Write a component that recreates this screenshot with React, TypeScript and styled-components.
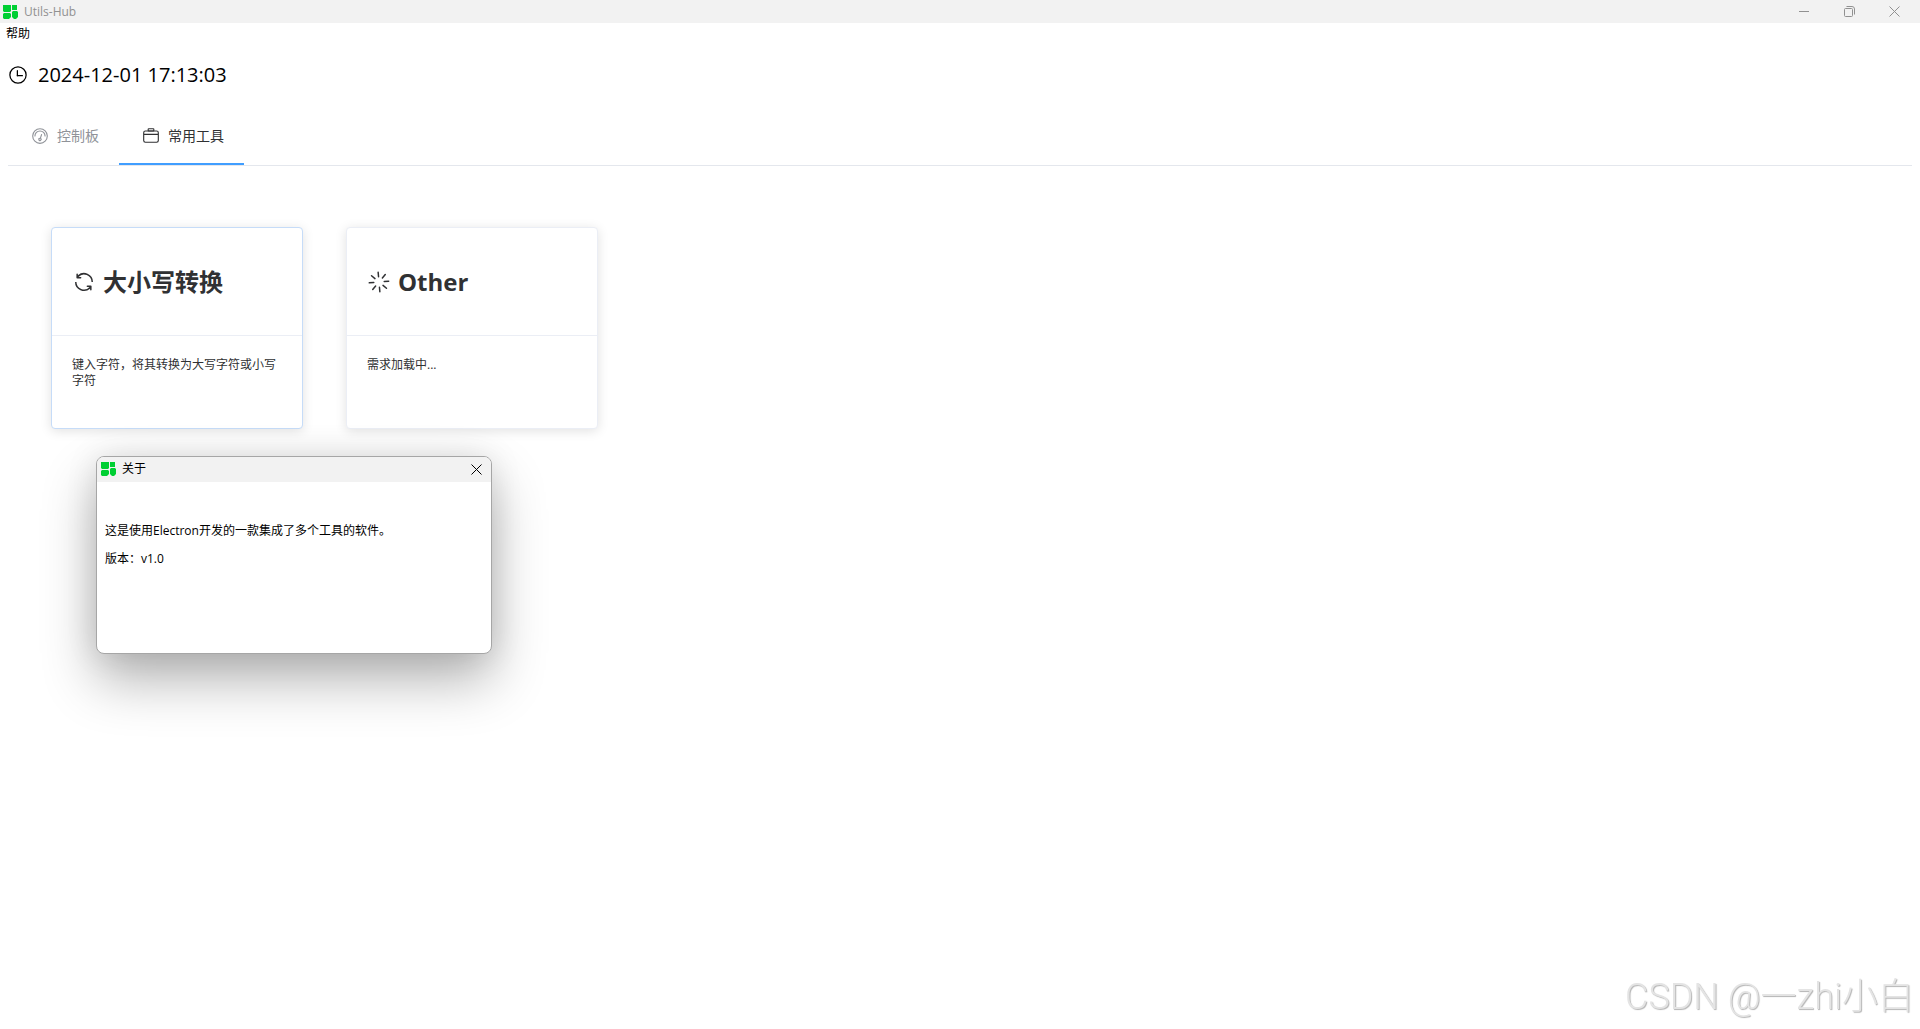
import React from "react";
import styled, { createGlobalStyle } from "styled-components";

const uiFont = `"Open Sans", "Noto Sans CJK SC", sans-serif`;

const GlobalStyle = createGlobalStyle`
  *, *::before, *::after { box-sizing: border-box; }
  body { margin: 0; background: #fff; color: #000; font: 12px/16px ${uiFont}; }
  h1, h2, p { margin: 0; }
  button { margin: 0; padding: 0; border: 0; background: none; color: inherit; font: inherit; }
`;

const Window = styled.div`
  display: flex;
  flex-direction: column;
  min-height: 100vh;
`;

const TitleBar = styled.header<{ $inactive?: boolean }>`
  display: flex;
  align-items: center;
  background: #f2f2f2;
  height: ${(p) => (p.$inactive ? 23 : 25)}px;
  padding: ${(p) => (p.$inactive ? "0 3px" : "0 0 1px 4px")};
  color: ${(p) => (p.$inactive ? "#919191" : "#000")};
`;

const WindowTitle = styled.h2`
  flex: 1;
  margin-left: 6px;
  font-size: 12px;
  line-height: 16px;
  font-weight: 400;
`;

const CaptionButton = styled.button<{ $width: number }>`
  display: flex;
  align-items: center;
  justify-content: center;
  width: ${(p) => p.$width}px;
  height: 20px;
`;

const MenuBar = styled.nav`
  display: flex;
  padding: 3px 6px 1px;
`;

const MenuItem = styled.button`
  font-size: 12px;
  line-height: 16px;
`;

const Main = styled.main`
  display: flex;
  flex-direction: column;
  padding: 16px 8px;
`;

const ClockRow = styled.div`
  display: flex;
  align-items: center;
  gap: 10px;
  height: 32px;
  font-size: 20px;
  line-height: 28px;
`;

const Tabs = styled.div`
  display: flex;
  margin-top: 10px;
  border-bottom: 1px solid #e4e7ed;
`;

const Tab = styled.button<{ $active?: boolean }>`
  display: flex;
  align-items: center;
  gap: 8px;
  height: 64px;
  padding: 8px 20px 0 23px;
  border-bottom: 2px solid ${(p) => (p.$active ? "#409eff" : "transparent")};
  color: ${(p) => (p.$active ? "#303133" : "#909399")};
  font-size: 14px;
  line-height: 20px;
`;

const CardList = styled.section`
  display: flex;
  flex-wrap: wrap;
  gap: 43px;
  padding: 61px 43px;
`;

const Card = styled.article<{ $hovered?: boolean }>`
  width: 252px;
  min-height: 202px;
  border: 1px solid ${(p) => (p.$hovered ? "#c6dcf8" : "#ebeef5")};
  border-radius: 4px;
  background: #fff;
  color: #303133;
  box-shadow: 0 2px 12px rgba(0, 0, 0, 0.12);
`;

const CardHeader = styled.div`
  display: flex;
  align-items: center;
  gap: 7px;
  height: 108px;
  padding: 0 20px;
  border-bottom: 1px solid #ebeef5;
`;

const CardTitle = styled.h1`
  font-size: 24px;
  line-height: 32px;
  font-weight: 700;
`;

const CardText = styled.p`
  padding: 21px 20px;
`;

const Dialog = styled.div`
  position: absolute;
  left: 96px;
  top: 456px;
  width: 396px;
  height: 198px;
  overflow: hidden;
  border: 1px solid #a6a6a6;
  border-radius: 8px;
  background: #fff;
  box-shadow: 0 26px 54px rgba(0, 0, 0, 0.3), 0 0 32px rgba(0, 0, 0, 0.1);
`;

const DialogBody = styled.div`
  display: flex;
  flex-direction: column;
  gap: 12px;
  padding: 41px 8px;
`;

const Watermark = styled.div`
  position: fixed;
  right: 6px;
  bottom: 4px;
  color: #e4e4e4;
  font: 300 36px/56px Roboto, "Noto Sans CJK SC", sans-serif;
  text-shadow: 1px 1px 1px #b4b4b4;
`;

const iconPaths = {
  clock: [
    "M512 896a384 384 0 1 0 0-768 384 384 0 0 0 0 768m0 64a448 448 0 1 1 0-896 448 448 0 0 1 0 896",
    "M480 256a32 32 0 0 1 32 32v256a32 32 0 0 1-64 0V288a32 32 0 0 1 32-32",
    "M480 512h256q32 0 32 32t-32 32H480q-32 0-32-32t32-32",
  ],
  odometer: [
    "M512 896a384 384 0 1 0 0-768 384 384 0 0 0 0 768m0 64a448 448 0 1 1 0-896 448 448 0 0 1 0 896",
    "M192 512a320 320 0 1 1 640 0 32 32 0 1 1-64 0 256 256 0 1 0-512 0 32 32 0 0 1-64 0",
    "M570.432 627.84A96 96 0 1 1 509.568 608l60.992-187.776A32 32 0 1 1 631.424 440l-60.992 187.776zM502.08 734.464a32 32 0 1 0 19.84-60.928 32 32 0 0 0-19.84 60.928",
  ],
  suitcase: [
    "M128 384h768v-64a64 64 0 0 0-64-64H192a64 64 0 0 0-64 64zm0 64v320a64 64 0 0 0 64 64h640a64 64 0 0 0 64-64V448zm64-256h640a128 128 0 0 1 128 128v448a128 128 0 0 1-128 128H192A128 128 0 0 1 64 768V320a128 128 0 0 1 128-128",
    "M384 128v64h256v-64zm0-64h256a64 64 0 0 1 64 64v64a64 64 0 0 1-64 64H384a64 64 0 0 1-64-64v-64a64 64 0 0 1 64-64",
  ],
  refresh: [
    "M771.776 794.88A384 384 0 0 1 128 512h64a320 320 0 0 0 555.712 216.448H654.72a32 32 0 1 1 0-64h149.056a32 32 0 0 1 32 32v148.928a32 32 0 1 1-64 0v-50.56zM276.288 295.616h92.992a32 32 0 0 1 0 64H220.16a32 32 0 0 1-32-32V178.56a32 32 0 0 1 64 0v50.56A384 384 0 0 1 896.128 512h-64a320 320 0 0 0-555.776-216.384z",
  ],
  loading: [
    "M512 64a32 32 0 0 1 32 32v192a32 32 0 0 1-64 0V96a32 32 0 0 1 32-32m0 640a32 32 0 0 1 32 32v192a32 32 0 1 1-64 0V736a32 32 0 0 1 32-32m448-192a32 32 0 0 1-32 32H736a32 32 0 1 1 0-64h192a32 32 0 0 1 32 32m-640 0a32 32 0 0 1-32 32H96a32 32 0 0 1 0-64h192a32 32 0 0 1 32 32M195.2 195.2a32 32 0 0 1 45.248 0L376.32 331.008a32 32 0 0 1-45.248 45.248L195.2 240.448a32 32 0 0 1 0-45.248m452.544 452.544a32 32 0 0 1 45.248 0L828.8 783.552a32 32 0 0 1-45.248 45.248L647.744 692.992a32 32 0 0 1 0-45.248M828.8 195.264a32 32 0 0 1 0 45.184L692.992 376.32a32 32 0 0 1-45.248-45.248l135.808-135.808a32 32 0 0 1 45.248 0m-452.544 452.48a32 32 0 0 1 0 45.248L240.448 828.8a32 32 0 0 1-45.248-45.248l135.808-135.808a32 32 0 0 1 45.248 0",
  ],
};

function Icon({ name, size, turn = 0 }: { name: keyof typeof iconPaths; size: number; turn?: number }) {
  return (
    <svg viewBox="0 0 1024 1024" width={size} height={size} fill="currentColor" aria-hidden="true">
      <g transform={`rotate(${turn} 512 512)`}>
        {iconPaths[name].map((d) => (
          <path key={d} d={d} />
        ))}
      </g>
    </svg>
  );
}

function Logo() {
  return (
    <svg width="15" height="14" viewBox="0 0 15 14" fill="#00cf33" aria-hidden="true">
      <path d="M0 0h8v6l-1 1H1L0 6zM9 0h5v5H9zM1 8h6l1 1v3l-1 1-1 1H1l-1-1V9zM10 6h4l1 1v5l-2 2h-2l-2-2V7z" />
    </svg>
  );
}

function CloseGlyph() {
  return (
    <svg width="11" height="11" viewBox="0 0 11 11" fill="none" stroke="currentColor" aria-hidden="true">
      <path d="M.5.5l10 10M10.5.5l-10 10" />
    </svg>
  );
}

export default function App() {
  return (
    <Window>
      <GlobalStyle />
      <TitleBar $inactive>
        <Logo />
        <WindowTitle>Utils-Hub</WindowTitle>
        <CaptionButton $width={45} aria-label="最小化">
          <svg width="11" height="11" stroke="currentColor" aria-hidden="true">
            <path d="M0 5.5h10" />
          </svg>
        </CaptionButton>
        <CaptionButton $width={45} aria-label="还原">
          <svg width="11" height="11" viewBox="0 0 11 11" fill="none" stroke="currentColor" aria-hidden="true">
            <rect x=".5" y="2.5" width="8" height="8" rx="1" />
            <path d="M2.500.5h5.500a2.500 2.500 0 0 1 2.500 2.500v5.500" />
          </svg>
        </CaptionButton>
        <CaptionButton $width={45} aria-label="关闭">
          <CloseGlyph />
        </CaptionButton>
      </TitleBar>
      <MenuBar>
        <MenuItem>帮助</MenuItem>
      </MenuBar>
      <Main>
        <ClockRow>
          <Icon name="clock" size={20} />
          <time dateTime="2024-12-01T17:13:03">2024-12-01 17:13:03</time>
        </ClockRow>
        <Tabs role="tablist">
          <Tab role="tab" aria-selected={false}>
            <Icon name="odometer" size={18} />
            控制板
          </Tab>
          <Tab role="tab" aria-selected $active>
            <Icon name="suitcase" size={18} />
            常用工具
          </Tab>
        </Tabs>
        <CardList>
          <Card $hovered>
            <CardHeader>
              <Icon name="refresh" size={24} />
              <CardTitle>大小写转换</CardTitle>
            </CardHeader>
            <CardText>键入字符，将其转换为大写字符或小写字符</CardText>
          </Card>
          <Card>
            <CardHeader>
              <Icon name="loading" size={24} turn={-5} />
              <CardTitle>Other</CardTitle>
            </CardHeader>
            <CardText>需求加载中...</CardText>
          </Card>
        </CardList>
      </Main>
      <Dialog role="dialog" aria-label="关于">
        <TitleBar>
          <Logo />
          <WindowTitle>关于</WindowTitle>
          <CaptionButton $width={30} aria-label="关闭">
            <CloseGlyph />
          </CaptionButton>
        </TitleBar>
        <DialogBody>
          <p>这是使用Electron开发的一款集成了多个工具的软件。</p>
          <p>版本：v1.0</p>
        </DialogBody>
      </Dialog>
      <Watermark>CSDN @一zhi小白</Watermark>
    </Window>
  );
}
